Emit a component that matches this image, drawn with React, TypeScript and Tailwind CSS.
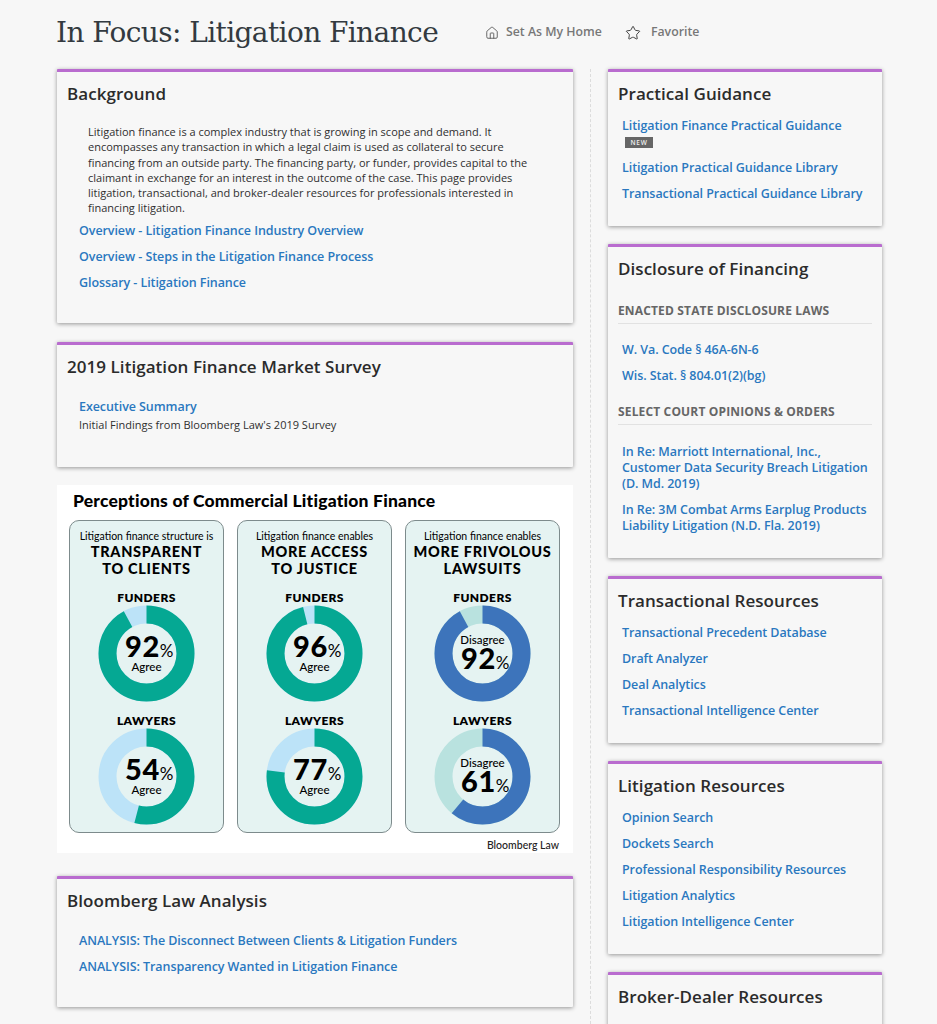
import React from "react";
import { Home, Star } from "lucide-react";

const sans = "font-['Open_Sans','Noto_Sans',sans-serif]";

function Card({ title, className, children }: { title: string; className: string; children?: React.ReactNode }) {
  return (
    <section className={`border-t-[3px] border-[#b96ccf] bg-[#f7f7f7] rounded-[1px] shadow-[0_1px_4px_rgba(0,0,0,0.4)] px-[10px] ${className}`}>
      <h2 className="text-[17px] leading-[24px] font-semibold text-[#2b2b2b] pt-[10px] tracking-[0.05px]">{title}</h2>
      {children}
    </section>
  );
}

function L({ children, className = "" }: { children: React.ReactNode; className?: string }) {
  return <a className={`block text-[12.5px] leading-[16px] font-semibold text-[#2a78bf] tracking-[-0.07px] ${className}`}>{children}</a>;
}

function Donut({ pct, color, rest, label, top }: { pct: number; color: string; rest: string; label: string; top: boolean }) {
  const r = 39;
  const c = 2 * Math.PI * r;
  return (
    <div className="relative w-[97px] h-[97px] mx-auto">
      <svg width="97" height="97" viewBox="0 0 97 97" className="block">
        <circle cx="48.5" cy="48.5" r={r} fill="none" stroke={rest} strokeWidth="18" />
        <circle
          cx="48.5"
          cy="48.5"
          r={r}
          fill="none"
          stroke={color}
          strokeWidth="18"
          strokeDasharray={`${(c * pct) / 100} ${c}`}
          transform="rotate(-90 48.5 48.5)"
        />
      </svg>
      <div className={`absolute inset-0 flex flex-col items-center justify-center text-black font-['Lato',sans-serif] ${top ? "pt-[1px]" : "pt-[2px]"}`}>
        {top && <span className="text-[11.5px] leading-[13px] font-medium">{label}</span>}
        <span className={`${top ? "leading-[24px]" : "leading-[18px]"} font-black text-[29px] tracking-[0.5px] pl-[6px]`}>
          {pct}
          <span className="text-[17px] font-normal">%</span>
        </span>
        {!top && <span className="text-[11.5px] leading-[13px] font-medium">{label}</span>}
      </div>
    </div>
  );
}

function Panel({ lead, l1, l2, a, b, color, rest, label, top }: { lead: string; l1: string; l2: string; a: number; b: number; color: string; rest: string; label: string; top: boolean }) {
  return (
    <div className="w-[155px] h-[313px] rounded-[10px] border border-[#7d8b8c] bg-[#e5f3f2] pt-[9px] text-center font-['Lato',sans-serif] text-black">
      <p className="text-[10.5px] leading-[13px] font-normal">{lead}</p>
      <p className="text-[14.5px] leading-[16.5px] font-black tracking-[0.7px] mt-[1px]">{l1}<br />{l2}</p>
      <p className="text-[12px] leading-[14px] font-extrabold tracking-[0.4px] mt-[14px]">FUNDERS</p>
      <Donut pct={a} color={color} rest={rest} label={label} top={top} />
      <p className="text-[12px] leading-[14px] font-extrabold tracking-[0.4px] mt-[12px]">LAWYERS</p>
      <Donut pct={b} color={color} rest={rest} label={label} top={top} />
    </div>
  );
}

export default function App() {
  return (
    <div className={`h-[1024px] overflow-hidden bg-[#f7f7f7] ${sans}`}>
      <header className="flex items-center pl-[56px] pt-[15px] h-[69px] pb-[18px]">
        <h1 className="font-['DejaVu_Serif',serif] text-[28px] leading-[36px] text-[#333a40] tracking-[-0.6px] w-[429px] whitespace-nowrap">In Focus: Litigation Finance</h1>
        <a className="flex items-center text-[12.3px] font-semibold text-[#777] -mt-[1px]">
          <Home size={14} strokeWidth={1.5} className="mr-[7px] text-[#555]" />Set As My Home
        </a>
        <a className="flex items-center text-[12.3px] font-semibold text-[#777] ml-[23px] -mt-[1px]">
          <Star size={16} strokeWidth={1.5} className="mr-[10px] text-[#444]" />Favorite
        </a>
      </header>
      <div className="flex pl-[57px]">
        <main className="w-[516px] flex flex-col">
          <Card title="Background" className="h-[254px]">
            <p className="text-[11px] leading-[15.3px] text-[#2f2f2f] pl-[21px] pr-[25px] mt-[18px]">
              Litigation finance is a complex industry that is growing in scope and demand. It encompasses any transaction in which a legal claim is used as collateral to secure financing from an outside party. The financing party, or funder, provides capital to the claimant in exchange for an interest in the outcome of the case. This page provides litigation, transactional, and broker-dealer resources for professionals interested in financing litigation.
            </p>
            <div className="pl-[12px] mt-[7px] flex flex-col gap-[10px]">
              <L>Overview - Litigation Finance Industry Overview</L>
              <L>Overview - Steps in the Litigation Finance Process</L>
              <L>Glossary - Litigation Finance</L>
            </div>
          </Card>
          <Card title="2019 Litigation Finance Market Survey" className="h-[125px] mt-[19px]">
            <div className="pl-[12px] mt-[20px]">
              <L>Executive Summary</L>
              <p className="text-[11px] leading-[16px] text-[#2f2f2f] mt-[2px]">Initial Findings from Bloomberg Law's 2019 Survey</p>
            </div>
          </Card>
          <figure className="mt-[18px] h-[368px] bg-white px-[12px] pt-[5px]">
            <h3 className="font-['Lato',sans-serif] font-black text-[17.5px] leading-[22px] text-black pl-[4px] mb-[8px] tracking-[0.2px]">Perceptions of Commercial Litigation Finance</h3>
            <div className="flex justify-between w-[491px]">
              <Panel lead="Litigation finance structure is" l1="TRANSPARENT" l2="TO CLIENTS" a={92} b={54} color="#05a893" rest="#bce3f8" label="Agree" top={false} />
              <Panel lead="Litigation finance enables" l1="MORE ACCESS" l2="TO JUSTICE" a={96} b={77} color="#05a893" rest="#bce3f8" label="Agree" top={false} />
              <Panel lead="Litigation finance enables" l1="MORE FRIVOLOUS" l2="LAWSUITS" a={92} b={61} color="#3d74bb" rest="#b9e2df" label="Disagree" top={true} />
            </div>
            <p className="font-['Lato',sans-serif] text-[10.5px] font-medium leading-[14px] text-[#222] text-right mt-[5px] pr-[2px]">Bloomberg Law</p>
          </figure>
          <Card title="Bloomberg Law Analysis" className="h-[131px] mt-[23px]">
            <div className="pl-[12px] mt-[20px] flex flex-col gap-[10px]">
              <L>ANALYSIS: The Disconnect Between Clients &amp; Litigation Funders</L>
              <L>ANALYSIS: Transparency Wanted in Litigation Finance</L>
            </div>
          </Card>
        </main>
        <div className="ml-[17px] w-0 h-[955px] border-l border-dashed border-[#dcdcdc]" />
        <aside className="ml-[17px] w-[274px] flex flex-col gap-[18px]">
          <Card title="Practical Guidance" className="h-[157px]">
            <div className="pl-[4px] mt-[12px]">
              <L>Litigation Finance Practical Guidance</L>
              <span className="block w-[28px] h-[11px] mt-[3px] ml-[3px] bg-[#666] text-[#eee] text-[6.5px] leading-[11px] text-center font-semibold tracking-[0.7px]">NEW</span>
              <L className="mt-[12px]">Litigation Practical Guidance Library</L>
              <L className="mt-[10px]">Transactional Practical Guidance Library</L>
            </div>
          </Card>
          <Card title="Disclosure of Financing" className="h-[314px]">
            <h4 className="text-[12px] leading-[16px] font-bold text-[#666] mt-[22px] pb-[4px] border-b border-[#e2e2e2] tracking-[0.15px]">ENACTED STATE DISCLOSURE LAWS</h4>
            <div className="pl-[4px] mt-[18px] flex flex-col gap-[10px]">
              <L>W. Va. Code § 46A-6N-6</L>
              <L>Wis. Stat. § 804.01(2)(bg)</L>
            </div>
            <h4 className="text-[12px] leading-[16px] font-bold text-[#666] mt-[20px] pb-[4px] border-b border-[#e2e2e2] tracking-[0.15px]">SELECT COURT OPINIONS &amp; ORDERS</h4>
            <div className="pl-[4px] mt-[19px] flex flex-col gap-[10px]">
              <L>In Re: Marriott International, Inc., Customer Data Security Breach Litigation (D. Md. 2019)</L>
              <L>In Re: 3M Combat Arms Earplug Products Liability Litigation (N.D. Fla. 2019)</L>
            </div>
          </Card>
          <Card title="Transactional Resources" className="h-[167px]">
            <div className="pl-[4px] mt-[12px] flex flex-col gap-[10px]">
              <L>Transactional Precedent Database</L>
              <L>Draft Analyzer</L>
              <L>Deal Analytics</L>
              <L>Transactional Intelligence Center</L>
            </div>
          </Card>
          <Card title="Litigation Resources" className="h-[193px]">
            <div className="pl-[4px] mt-[12px] flex flex-col gap-[10px]">
              <L>Opinion Search</L>
              <L>Dockets Search</L>
              <L>Professional Responsibility Resources</L>
              <L>Litigation Analytics</L>
              <L>Litigation Intelligence Center</L>
            </div>
          </Card>
          <Card title="Broker-Dealer Resources" className="h-[120px]" />
        </aside>
      </div>
    </div>
  );
}
